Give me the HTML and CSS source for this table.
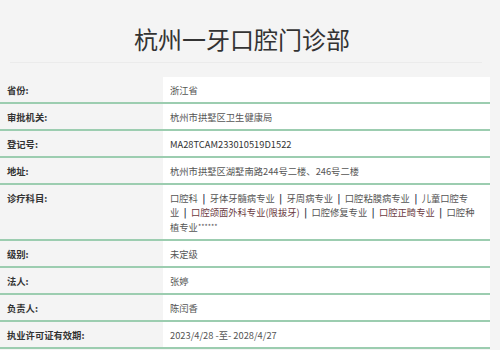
FILE: index.html
```html
<!DOCTYPE html>
<html lang="zh">
<head>
<meta charset="utf-8">
<title>杭州一牙口腔门诊部</title>
<link rel="stylesheet" href="styles.css">
</head>
<body>
<div class="page">
  <header class="head">
    <h1 class="title">杭州一牙口腔门诊部</h1>
  </header>
  <div class="info">
    <div class="row"><div class="label">省份:</div><div class="value">浙江省</div></div>
    <div class="row"><div class="label">审批机关:</div><div class="value">杭州市拱墅区卫生健康局</div></div>
    <div class="row"><div class="label">登记号:</div><div class="value dark">MA28TCAM233010519D1522</div></div>
    <div class="row"><div class="label">地址:</div><div class="value">杭州市拱墅区湖墅南路244号二楼、246号二楼</div></div>
    <div class="row"><div class="label">诊疗科目:</div><div class="value">口腔科<span class="sep">|</span>牙体牙髓病专业<span class="sep">|</span>牙周病专业<span class="sep">|</span>口腔粘膜病专业<span class="sep">|</span>儿童口腔专业<span class="sep">|</span><span class="red">口腔颌面外科专业(限拔牙)</span><span class="sep">|</span>口腔修复专业<span class="sep">|</span><span class="red">口腔正畸专业</span><span class="sep">|</span>口腔种植专业<span class="stars">******</span></div></div>
    <div class="row"><div class="label">级别:</div><div class="value">未定级</div></div>
    <div class="row"><div class="label">法人:</div><div class="value">张婷</div></div>
    <div class="row"><div class="label">负责人:</div><div class="value">陈闰香</div></div>
    <div class="row"><div class="label">执业许可证有效期:</div><div class="value">2023/4/28 -至- 2028/4/27</div></div>
  </div>
</div>
</body>
</html>
```
FILE: styles.css
```css
html, body {
  margin: 0;
  padding: 0;
  background: #f4f4f4;
}
body {
  font-family: "Noto Sans CJK SC", "Noto Sans", sans-serif;
  color: #333;
}
.page {
  width: 500px;
  height: 350px;
  overflow: hidden;
}
.head {
  margin: 0 18px 0 10px;
  padding: 25px 0 9px;
  border-bottom: 1px solid #ebebeb;
  text-align: center;
}
.title {
  margin: 0;
  font-size: 24px;
  font-weight: normal;
  line-height: 28px;
  color: #333;
  padding-right: 8px;
}
.info {
  width: 490px;
  margin-top: 14px;
}
.row {
  display: grid;
  grid-template-columns: 163px 1fr;
  border-bottom: 2px solid #9ccdb0;
}
.label {
  padding: 5.5px 7px;
  font-size: 9.3px;
  line-height: 14px;
  font-weight: bold;
  color: #333;
}
.value {
  background: #fff;
  padding: 5.5px 10px 5.5px 7px;
  font-size: 9.3px;
  line-height: 14px;
  color: #555;
}
.value.dark {
  color: #333;
}
.sep {
  color: #2a2f45;
  margin: 0 4.5px;
  font-weight: bold;
}
.red {
  color: #6b3b3f;
}
.stars {
  font-size: 7px;
  vertical-align: 2px;
}
```
